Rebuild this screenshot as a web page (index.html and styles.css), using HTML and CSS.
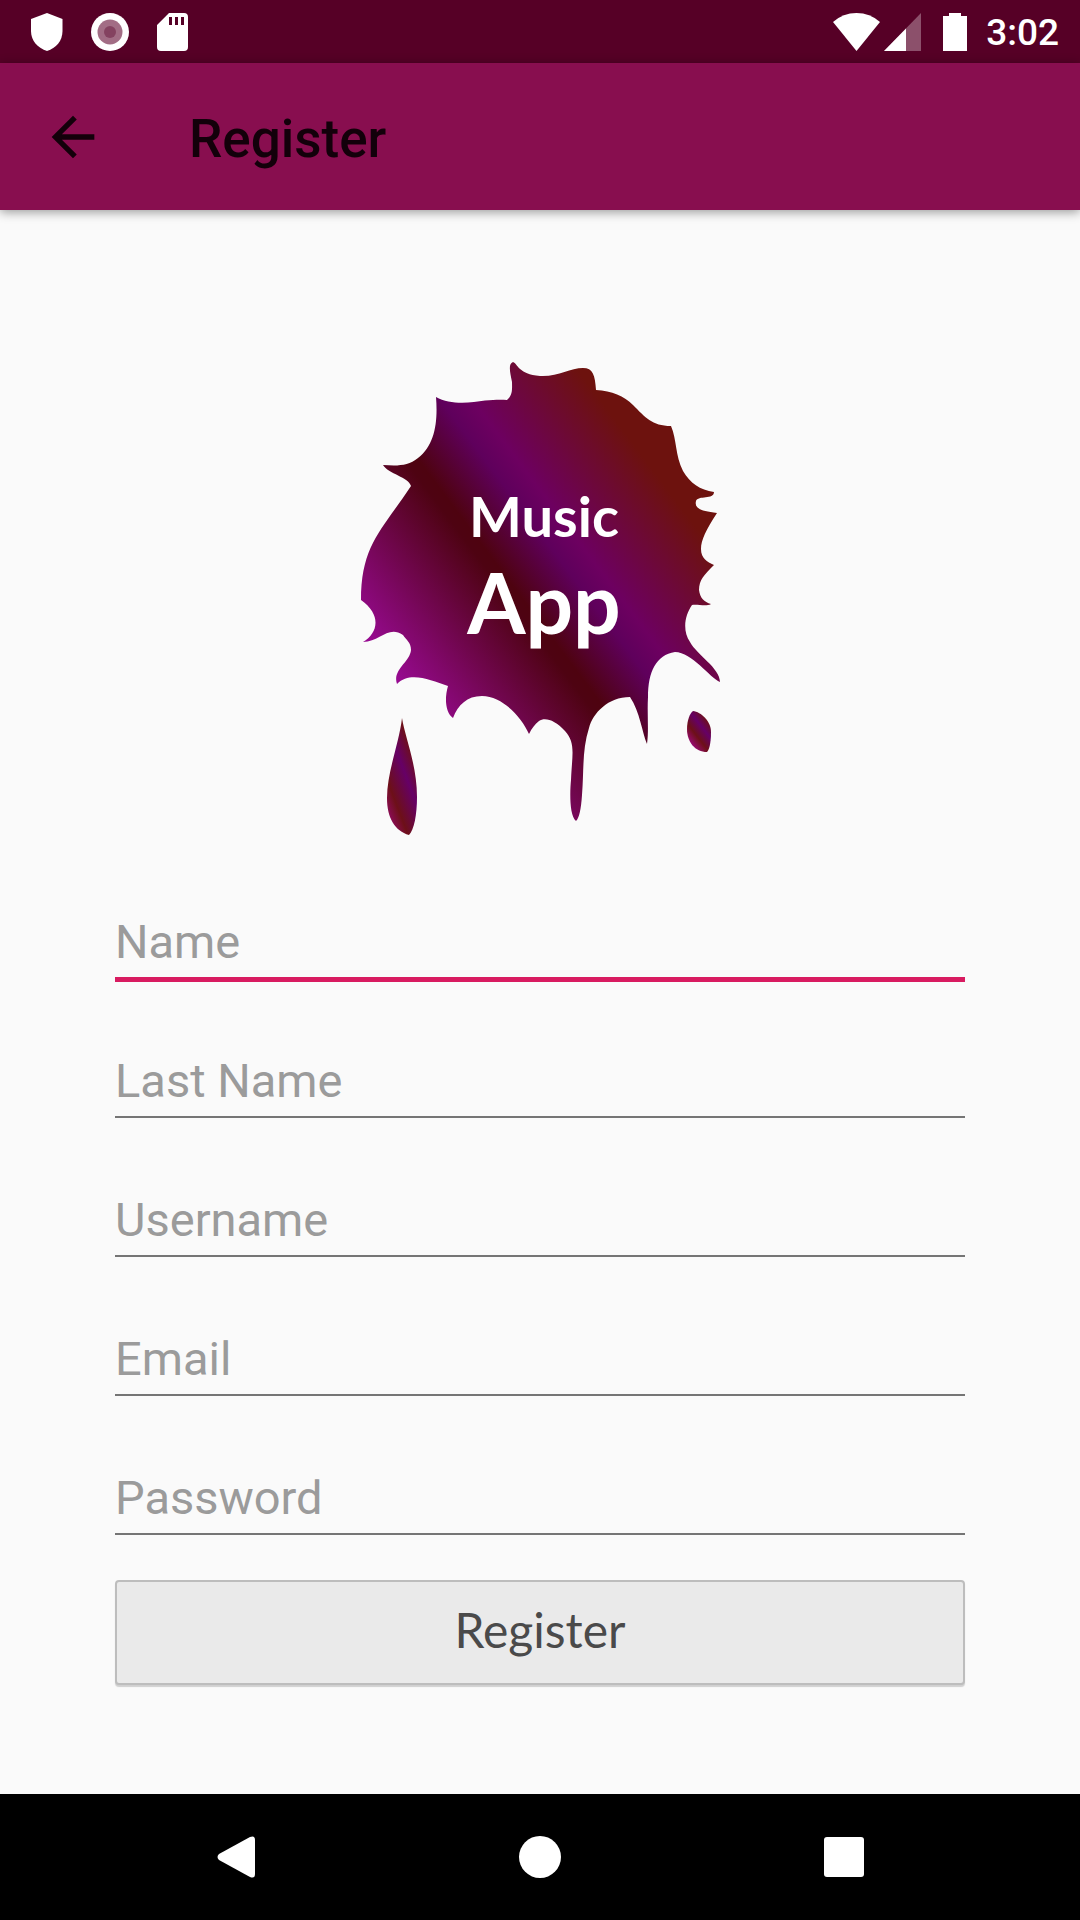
FILE: index.html
```html
<!DOCTYPE html>
<html lang="en">
<head>
<meta charset="utf-8">
<meta name="viewport" content="width=device-width, initial-scale=1">
<title>Register</title>
<link rel="stylesheet" href="styles.css">
</head>
<body>
<div class="status-bar">
  <div class="status-group status-notifications">
    <svg width="32" height="38" viewBox="0 0 32 38" aria-hidden="true"><path fill="#fff" d="M16 0 31.500 6V18C31.500 28 25 35 16 38 7 35 0 28 0 18V6Z"/></svg>
    <svg width="38" height="38" viewBox="0 0 38 38" aria-hidden="true"><circle cx="19" cy="19" r="19" fill="#fff"/><circle cx="19" cy="19" r="12.500" fill="#a26d85"/><circle cx="19" cy="19" r="6" fill="#844260"/></svg>
    <svg width="31" height="38" viewBox="0 0 31 38" aria-hidden="true"><path fill="#fff" fill-rule="evenodd" d="M12 0H27Q31 0 31 4V34Q31 38 27 38H4Q0 38 0 34V12ZM12 4V12H15V4ZM18 4V12H21V4ZM24 4V12H27V4Z"/></svg>
  </div>
  <div class="status-group status-system">
    <svg width="47" height="38" viewBox="0 0 47 38" aria-hidden="true"><path fill="#fff" d="M0 9Q10 0 23.500 0T47 9L23.500 38Z"/></svg>
    <svg width="37" height="38" viewBox="0 0 37 38" aria-hidden="true"><path fill="#8c506b" d="M37 0V38H0Z"/><path fill="#fff" d="M22 15.500V38H0Z"/></svg>
    <svg class="battery" width="24" height="38" viewBox="0 0 24 38" aria-hidden="true"><path fill="#fff" d="M6 0H18V3H24V38H0V3H6Z"/></svg>
    <span class="clock">3:02</span>
  </div>
</div>
<header class="app-bar">
  <button class="back" type="button" aria-label="Back">
    <svg width="64" height="64" viewBox="0 0 24 24" aria-hidden="true"><path fill="#13000a" d="M20 11H7.830l5.590-5.590L12 4l-8 8 8 8 1.410-1.410L7.830 13H20v-2z"/></svg>
  </button>
  <h1 class="title">Register</h1>
</header>
<main class="content">
  <svg class="logo" viewBox="0 0 400 510" role="img" aria-label="Music App">
    <defs>
      <linearGradient id="ink" gradientUnits="userSpaceOnUse" x1="-128" y1="96" x2="152" y2="-114">
        <stop offset="0" stop-color="#980a92"/>
        <stop offset=".4" stop-color="#4e0312"/>
        <stop offset=".43" stop-color="#4e0310"/>
        <stop offset=".583" stop-color="#5f005c"/>
        <stop offset=".657" stop-color="#6d0060"/>
        <stop offset=".95" stop-color="#6d120e"/>
      </linearGradient>
      <linearGradient id="drop-left" gradientUnits="userSpaceOnUse" x1="34" y1="451" x2="81" y2="433">
        <stop offset="0" stop-color="#980a72"/>
        <stop offset=".32" stop-color="#6d1018"/>
        <stop offset=".7" stop-color="#660066"/>
        <stop offset="1" stop-color="#6d1018"/>
      </linearGradient>
      <linearGradient id="drop-right" gradientUnits="userSpaceOnUse" x1="348" y1="400" x2="370" y2="383">
        <stop offset="0" stop-color="#980a72"/>
        <stop offset=".34" stop-color="#6d1018"/>
        <stop offset=".68" stop-color="#660066"/>
        <stop offset="1" stop-color="#6d1018"/>
      </linearGradient>
    </defs>
    <path fill="url(#ink)" d="M96 57C110 65 130 63 145 60.500C155 59.500 162 59.500 167 60C173 55 172 48 172 42C170 32 168 24 173 22C178 24 178 34 200 36C218 37 230 28 243 28C253 28 255 35 256 50C272 51 284 56 293 65C305 77 312 86 331 86C337 100 335 115 343 131C350 143 360 150 374 152C374 160 358 155 356 161C354 169 362 171 377 173C366 190 361 200 361 209C361 218 367 222 374 225C364 235 359 240 359 250C360 258 364 262 371 264C366 267 358 264 352 265C345 275 342 290 350 302C357 315 380 328 380 342C370 338 352 312 335 312C316 315 308 332 308 357C307 375 309 390 307 404C302 392 300 372 290 357C268 357 253 373 249 388C242 410 244 430 242 455C241 470 239 478 236 481C229 475 230 450 231 440C232 415 236 403 225 391C215 380 205 377 199 381C195 384 192 388 189 394C182 378 163 356 142 356C127 356 118 365 113 378C106 373 104 360 108 346C90 340 70 331 57 344C52 330 70 322 71 310C71 302 66 300 63 295C48 285 40 302 23 302C38 293 42 275 21 260C21 205 42 190 71 146C69 137 48 134 43 125C58 126 68 126 78 118C95 105 98 82 96 57Z"/>
    <path fill="url(#drop-left)" d="M62 378C65 397 77 425 77 457C77 475 74 490 69 495C55 491 47 478 47 458C47 432 59 404 62 378Z"/>
    <path fill="url(#drop-right)" d="M353 371C361 372 371 381 371 392C371 404 369 410 367 412C355 412 347 402 347 389C347 380 350 373 353 371Z"/>
    <text class="logo-small" x="204" y="197" text-anchor="middle">Music</text>
    <text class="logo-large" x="204" y="294" text-anchor="middle">App</text>
  </svg>
  <form class="form">
    <input class="field field-active" type="text" placeholder="Name" aria-label="Name">
    <input class="field" type="text" placeholder="Last Name" aria-label="Last Name">
    <input class="field" type="text" placeholder="Username" aria-label="Username">
    <input class="field" type="email" placeholder="Email" aria-label="Email">
    <input class="field" type="password" placeholder="Password" aria-label="Password">
    <button class="submit" type="submit">Register</button>
  </form>
</main>
<nav class="nav-bar">
  <button class="nav-button" type="button" aria-label="Back">
    <svg width="42" height="42" viewBox="0 0 42 42" aria-hidden="true"><path fill="#fff" d="M4 18 35 1Q40-1 40 4V38Q40 43 35 41L4 24Q1 21 4 18Z"/></svg>
  </button>
  <button class="nav-button" type="button" aria-label="Home">
    <svg width="42" height="42" viewBox="0 0 42 42" aria-hidden="true"><circle cx="21" cy="21" r="21" fill="#fff"/></svg>
  </button>
  <button class="nav-button" type="button" aria-label="Overview">
    <svg width="42" height="42" viewBox="0 0 42 42" aria-hidden="true"><rect x="1" y="1" width="40" height="40" rx="3" fill="#fff"/></svg>
  </button>
</nav>
</body>
</html>
```
FILE: styles.css
```css
* {
  box-sizing: border-box;
}

body {
  display: flex;
  flex-direction: column;
  min-height: 100vh;
  margin: 0;
  background: #fafafa;
  font-family: Roboto, "Liberation Sans", sans-serif;
}

button {
  padding: 0;
  border: 0;
  background: none;
}

svg {
  display: block;
}

.status-bar {
  display: flex;
  justify-content: space-between;
  align-items: center;
  height: 63px;
  padding: 0 21px 0 31px;
  background: #560026;
}

.status-group {
  display: flex;
  align-items: center;
}

.status-notifications {
  gap: 28px;
}

.status-system {
  gap: 4px;
}

.battery {
  margin: 0 15px 0 18px;
}

.clock {
  color: #fff;
  font-size: 37px;
  font-weight: 500;
  line-height: 40px;
  padding-top: 2px;
}

.app-bar {
  display: flex;
  align-items: center;
  gap: 84px;
  height: 147px;
  padding: 0 41px;
  background: #880e4f;
  box-shadow: 0 2px 10px rgba(0, 0, 0, 0.4);
}

.title {
  margin: 0;
  color: #13000a;
  font-size: 53px;
  font-weight: 500;
  line-height: 64px;
  padding-top: 4px;
}

.content {
  flex: 1;
  display: flex;
  flex-direction: column;
  align-items: center;
  gap: 35px;
  padding: 130px 115px 104px;
}

.logo {
  width: 100%;
  max-width: 400px;
}

.logo-small,
.logo-large {
  fill: #fff;
  font-family: Lato, sans-serif;
  font-weight: 700;
}

.logo-small {
  font-size: 56px;
}

.logo-large {
  font-size: 84px;
}

.form {
  display: flex;
  flex-direction: column;
  align-self: stretch;
}

.field {
  width: 100%;
  height: 94px;
  margin: 0 0 45px;
  padding: 20px 0 0;
  border: 0;
  border-bottom: 2px solid #757575;
  border-radius: 0;
  outline: 0;
  background: none;
  color: #212121;
  font-family: inherit;
  font-size: 47px;
}

.field::placeholder {
  color: #9b9b9b;
  opacity: 1;
}

.field-active {
  height: 97px;
  margin-bottom: 42px;
  border-bottom: 5px solid #d81b60;
}

.submit {
  height: 105px;
  padding-bottom: 6px;
  border: 2px solid #bdbdbd;
  border-radius: 4px;
  background: #eaeaea;
  box-shadow: 0 2px 1px #d0d0d0;
  color: #4a4a4a;
  font-family: Lato, sans-serif;
  font-size: 48px;
  font-weight: 400;
}

.nav-bar {
  display: flex;
  height: 126px;
  padding: 0 84px;
  background: #000;
}

.nav-button {
  flex: 1;
  display: flex;
  justify-content: center;
  align-items: center;
}
```
